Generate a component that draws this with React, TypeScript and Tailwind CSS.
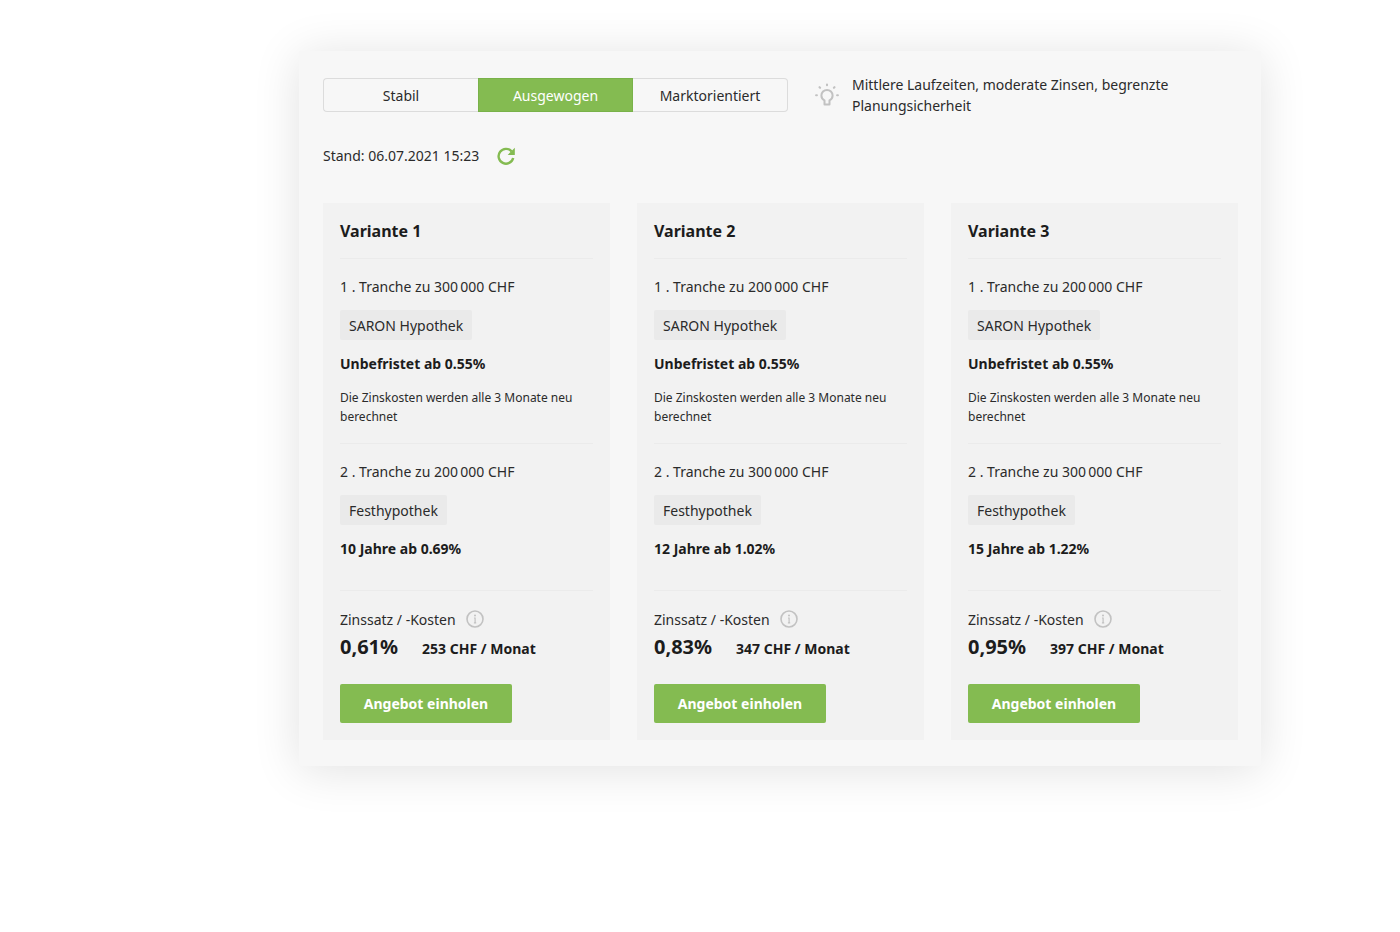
import { useState } from 'react';
import clsx from 'clsx';

const strategies = ['Stabil', 'Ausgewogen', 'Marktorientiert'];

const variants = [
  { title: 'Variante 1', saron: '300\u2009000', fixed: '200\u2009000', term: '10 Jahre ab 0.69%', rate: '0,61%', cost: '253' },
  { title: 'Variante 2', saron: '200\u2009000', fixed: '300\u2009000', term: '12 Jahre ab 1.02%', rate: '0,83%', cost: '347' },
  { title: 'Variante 3', saron: '200\u2009000', fixed: '300\u2009000', term: '15 Jahre ab 1.22%', rate: '0,95%', cost: '397' },
];

function BulbIcon() {
  return (
    <svg width="24" height="24" viewBox="0 0 24 24" fill="none" className="shrink-0 text-[#c2c2c2]" aria-hidden="true">
      <path
        d="M9.5 21.6v-4.2c-1.9-.9-3.1-2.7-3.1-4.9a5.6 5.6 0 0 1 11.2 0c0 2.2-1.2 4-3.1 4.9v4.2z"
        stroke="currentColor"
        strokeWidth="2"
        strokeLinejoin="round"
      />
      <path
        d="M12 1.5v.8M4.5 4.2l.6.6M19.5 4.2l-.6.6M1.1 12.3h.8M22.1 12.3h.8"
        stroke="currentColor"
        strokeWidth="2.1"
        strokeLinecap="round"
      />
    </svg>
  );
}

function RefreshIcon() {
  return (
    <svg width="18" height="18" viewBox="0 0 18 18" fill="none" aria-hidden="true">
      <path d="M14.6 4.4A7.4 7.4 0 1 0 16.2 11" stroke="currentColor" strokeWidth="2.4" />
      <path d="M17.8.8v7.1h-7.1z" fill="currentColor" />
    </svg>
  );
}

function InfoIcon() {
  return (
    <svg width="18" height="18" viewBox="0 0 18 18" fill="none" aria-hidden="true">
      <circle cx="9" cy="9" r="8" stroke="currentColor" strokeWidth="1.6" />
      <circle cx="9" cy="5.4" r="1" fill="currentColor" />
      <path d="M8 8h1.1v4.8M7.9 12.9h2.3" stroke="currentColor" strokeWidth="1.2" />
    </svg>
  );
}

function Tranche({ nr, amount, product, rate }: { nr: number; amount: string; product: string; rate: string }) {
  return (
    <>
      <p>{nr} . Tranche zu {amount} CHF</p>
      <span className="mt-[13px] inline-flex h-[30px] items-center self-start rounded-xs bg-[#eaeaea] px-[9px]">{product}</span>
      <p className="mt-[13px] font-bold text-[#1c1c1c]">{rate}</p>
    </>
  );
}

function VariantCard({ variant }: { variant: (typeof variants)[number] }) {
  return (
    <article className="flex flex-col bg-[#f2f2f2] px-[17px] pt-4 pb-[17px]">
      <h2 className="border-b border-[#ebebeb] pb-[15px] text-base leading-6 font-bold text-[#1c1c1c]">{variant.title}</h2>

      <section className="flex flex-col border-b border-[#ebebeb] pt-[17px] pb-[17px]">
        <Tranche nr={1} amount={variant.saron} product="SARON Hypothek" rate="Unbefristet ab 0.55%" />
        <p className="mt-[14px] text-xs leading-[19px]">Die Zinskosten werden alle 3 Monate neu berechnet</p>
      </section>

      <section className="flex flex-col border-b border-[#ebebeb] pt-[17px] pb-[31px]">
        <Tranche nr={2} amount={variant.fixed} product="Festhypothek" rate={variant.term} />
      </section>

      <section className="pt-[17px]">
        <div className="flex h-[22px] items-center gap-[10px]">
          <span>Zinssatz / -Kosten</span>
          <button type="button" aria-label="Info zu Zinssatz und Kosten" className="text-[#c2c2c2]">
            <InfoIcon />
          </button>
        </div>
        <p className="mt-1 flex items-baseline gap-6 font-bold text-[#1c1c1c]">
          <span className="text-xl leading-[26px]">{variant.rate}</span>
          <span>{variant.cost} CHF / Monat</span>
        </p>
        <button type="button" className="mt-6 h-[39px] w-[172px] rounded-xs bg-[#84bb51] font-bold text-white">
          Angebot einholen
        </button>
      </section>
    </article>
  );
}

export default function App() {
  const [active, setActive] = useState('Ausgewogen');

  return (
    <div className="min-h-screen bg-white pt-[51px] pr-[139px] pb-16 pl-[299px] font-['Noto_Sans',sans-serif] text-sm leading-[21px] text-[#2b2b2b]">
      <main className="rounded-xs bg-[#f7f7f7] pt-[23px] pr-[23px] pb-[26px] pl-6 shadow-[0_4px_48px_rgba(0,0,0,0.12)]">
        <header className="flex items-center">
          <div className="grid h-[34px] w-[465px] shrink-0 grid-cols-3" role="group" aria-label="Strategie">
            {strategies.map((name) => (
              <button
                key={name}
                type="button"
                aria-pressed={name === active}
                onClick={() => setActive(name)}
                className={clsx(
                  'border first:rounded-l-sm last:rounded-r-sm',
                  name === active ? 'border-[#79b24a] bg-[#84bb51] text-white' : 'border-[#dcdcdc] not-first:border-l-0 first:border-r-0',
                )}
              >
                {name}
              </button>
            ))}
          </div>
          <div className="ml-[27px] flex items-center gap-[13px]">
            <BulbIcon />
            <p className="max-w-[350px]">Mittlere Laufzeiten, moderate Zinsen, begrenzte Planungsicherheit</p>
          </div>
        </header>

        <div className="mt-[29px] flex items-center gap-[18px]">
          <span>Stand: 06.07.2021 15:23</span>
          <button type="button" aria-label="Aktualisieren" className="text-[#84bb51]">
            <RefreshIcon />
          </button>
        </div>

        <div className="mt-[37px] grid grid-cols-3 gap-[27px]">
          {variants.map((v) => (
            <VariantCard key={v.title} variant={v} />
          ))}
        </div>
      </main>
    </div>
  );
}
